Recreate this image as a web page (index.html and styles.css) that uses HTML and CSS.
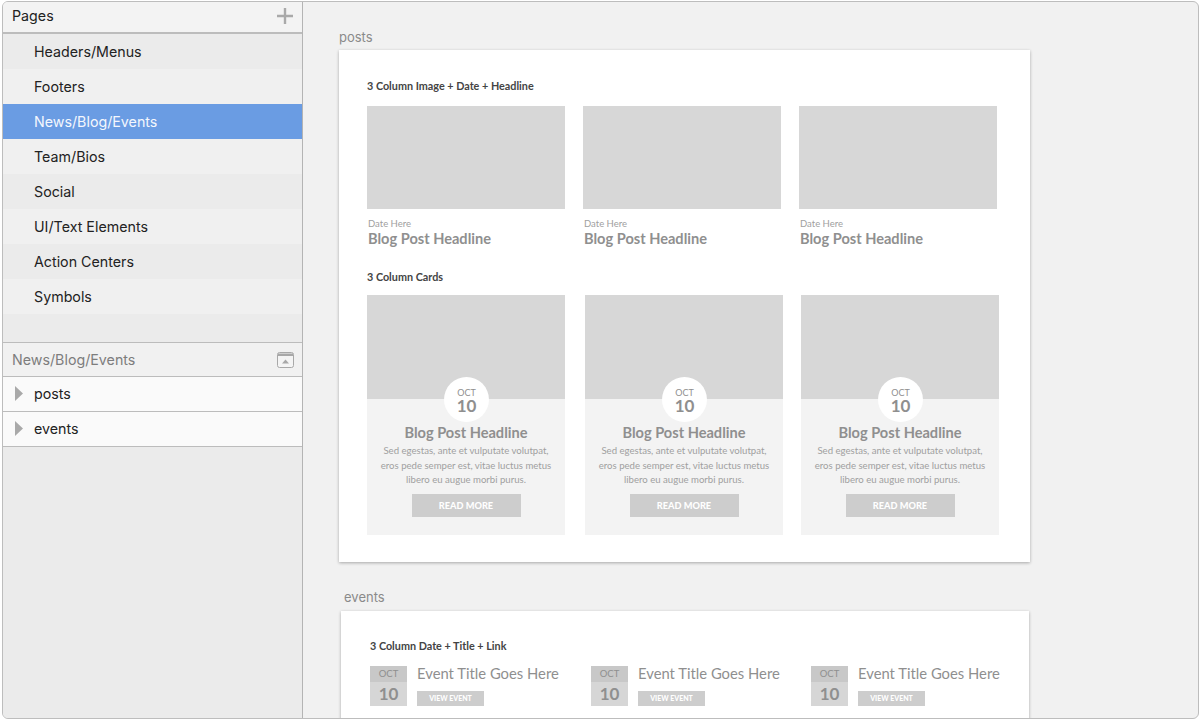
FILE: index.html
```html
<!DOCTYPE html>
<html lang="en">
<head>
<meta charset="utf-8">
<title>Pages</title>
<link rel="stylesheet" href="styles.css">
</head>
<body>
<div class="window">
  <aside class="sidebar">
    <header class="pages-head">
      <span>Pages</span>
      <svg class="plus" width="16" height="16" viewBox="0 0 16 16"><path d="M8 0v16M0 8h16" stroke="#a9a9a9" stroke-width="2.4" fill="none"/></svg>
    </header>
    <ul class="pages">
      <li class="dark">Headers/Menus</li>
      <li>Footers</li>
      <li class="selected">News/Blog/Events</li>
      <li>Team/Bios</li>
      <li class="dark">Social</li>
      <li>UI/Text Elements</li>
      <li class="dark">Action Centers</li>
      <li>Symbols</li>
    </ul>
    <div class="pages-rest"></div>
    <header class="layers-head">
      <span>News/Blog/Events</span>
      <svg width="17" height="16" viewBox="0 0 17 16"><rect x=".5" y=".5" width="16" height="15" rx="2" fill="#f4f4f4" stroke="#a8a8a8"/><path d="M1 1.500h15v2.500H1z" fill="#a8a8a8"/><path d="M8.500 7.500l3.500 4H5z" fill="#a8a8a8"/></svg>
    </header>
    <div class="layer"><svg width="8" height="15" viewBox="0 0 8 15"><path d="M0 0l8 7.500L0 15z" fill="#a9a9a9"/></svg><span>posts</span></div>
    <div class="layer"><svg width="8" height="15" viewBox="0 0 8 15"><path d="M0 0l8 7.500L0 15z" fill="#a9a9a9"/></svg><span>events</span></div>
  </aside>
  <main class="canvas">
    <div class="label label-posts">posts</div>
    <section class="board board-posts">
      <h2 class="section-title">3 Column Image + Date + Headline</h2>
      <div class="posts">
        <article class="post"><div class="image"></div><p class="date">Date Here</p><h3 class="headline">Blog Post Headline</h3></article>
        <article class="post"><div class="image"></div><p class="date">Date Here</p><h3 class="headline">Blog Post Headline</h3></article>
        <article class="post"><div class="image"></div><p class="date">Date Here</p><h3 class="headline">Blog Post Headline</h3></article>
      </div>
      <h2 class="section-title title-cards">3 Column Cards</h2>
      <div class="cards">
        <article class="card">
          <div class="image"></div>
          <div class="badge"><span class="month">OCT</span><span class="day">10</span></div>
          <h3 class="headline">Blog Post Headline</h3>
          <p class="copy">Sed egestas, ante et vulputate volutpat, eros pede semper est, vitae luctus metus libero eu augue morbi purus.</p>
          <a class="button">READ MORE</a>
        </article>
        <article class="card">
          <div class="image"></div>
          <div class="badge"><span class="month">OCT</span><span class="day">10</span></div>
          <h3 class="headline">Blog Post Headline</h3>
          <p class="copy">Sed egestas, ante et vulputate volutpat, eros pede semper est, vitae luctus metus libero eu augue morbi purus.</p>
          <a class="button">READ MORE</a>
        </article>
        <article class="card">
          <div class="image"></div>
          <div class="badge"><span class="month">OCT</span><span class="day">10</span></div>
          <h3 class="headline">Blog Post Headline</h3>
          <p class="copy">Sed egestas, ante et vulputate volutpat, eros pede semper est, vitae luctus metus libero eu augue morbi purus.</p>
          <a class="button">READ MORE</a>
        </article>
      </div>
    </section>
    <div class="label label-events">events</div>
    <section class="board board-events">
      <h2 class="section-title">3 Column Date + Title + Link</h2>
      <div class="events">
        <article class="event"><div class="cal"><span class="cal-month">OCT</span><span class="cal-day">10</span></div><div class="event-body"><h3 class="event-title">Event Title Goes Here</h3><a class="event-button">VIEW EVENT</a></div></article>
        <article class="event"><div class="cal"><span class="cal-month">OCT</span><span class="cal-day">10</span></div><div class="event-body"><h3 class="event-title">Event Title Goes Here</h3><a class="event-button">VIEW EVENT</a></div></article>
        <article class="event"><div class="cal"><span class="cal-month">OCT</span><span class="cal-day">10</span></div><div class="event-body"><h3 class="event-title">Event Title Goes Here</h3><a class="event-button">VIEW EVENT</a></div></article>
      </div>
    </section>
  </main>
</div>
</body>
</html>
```
FILE: styles.css
```css
* { box-sizing: border-box; }
html, body { margin: 0; height: 720px; overflow: hidden; background: #fff; }
h2, h3, p, ul { margin: 0; padding: 0; }
ul { list-style: none; }

.window {
  margin: 1px 1px 1px 2px;
  height: 718px;
  display: flex;
  border: 1px solid #bdbdbd;
  border-radius: 6px;
  overflow: hidden;
  background: #f1f1f1;
}

.sidebar {
  width: 300px;
  flex: none;
  display: flex;
  flex-direction: column;
  background: #ebebeb;
  border-right: 1px solid #b4b4b4;
  font-family: Inter, "Liberation Sans", sans-serif;
  font-size: 14.250px;
  color: #222;
}
.pages-head {
  height: 32px;
  flex: none;
  padding: 0 9px 3px 9px;
  display: flex;
  align-items: center;
  justify-content: space-between;
  background: #f3f3f3;
  border-bottom: 2px solid #bcbcbc;
}
.pages li {
  height: 35px;
  padding-left: 31px;
  display: flex;
  align-items: center;
  background: #f0f0f0;
}
.pages li.dark { background: #ebebeb; }
.pages li.selected { background: #6a9ce3; color: #f4f7fd; }
.pages-rest {
  height: 29px;
  flex: none;
  border-bottom: 1px solid #bcbcbc;
}
.layers-head {
  height: 34px;
  flex: none;
  padding: 0 8px 0 9px;
  display: flex;
  align-items: center;
  justify-content: space-between;
  background: #f1f1f1;
  color: #7d7d7d;
  border-bottom: 1px solid #bcbcbc;
}
.layer {
  height: 35px;
  flex: none;
  padding: 0 0 1px 12px;
  display: flex;
  align-items: center;
  gap: 11px;
  background: #fafafa;
  border-bottom: 1px solid #bcbcbc;
}

.canvas {
  flex: 1;
  min-width: 0;
  overflow: hidden;
  font-family: Lato, "Liberation Sans", sans-serif;
}
.label {
  font-family: Inter, "Liberation Sans", sans-serif;
  font-size: 13px;
  line-height: 16px;
  color: #8a8a8a;
}
.label-posts { margin: 27px 0 5px 36px; }
.label-events { margin: 27px 0 6px 41px; }

.board { background: #fff; box-shadow: 0 1px 3px rgba(0,0,0,.3); }
.board-posts { width: 691px; height: 512px; margin-left: 36px; padding: 29px 0 0 28px; }
.board-events { width: 688px; height: 120px; margin-left: 38px; padding: 28px 0 0 29px; }

.section-title {
  font-size: 10.800px;
  line-height: 14px;
  font-weight: 700;
  color: #444;
}
.title-cards { margin-top: 22px; }

.posts { display: flex; gap: 18px; margin-top: 13px; }
.post { width: 198px; }
.image { height: 103px; background: #d7d7d7; }
.date { margin-top: 9px; padding-left: 1px; font-size: 9.500px; line-height: 12px; color: #a0a0a0; }
.headline { font-size: 14.600px; line-height: 18px; font-weight: 700; color: #8f8f8f; }
.post .headline { padding-left: 1px; }

.cards { display: flex; gap: 18px; margin-top: 11px; }
.card {
  width: 198px;
  height: 240px;
  position: relative;
  background: #f3f3f3;
  text-align: center;
}
.card:nth-child(2) { margin-left: 2px; }
.card .image { height: 104px; }
.badge {
  position: absolute;
  top: 82px;
  left: 77px;
  width: 45px;
  height: 45px;
  border-radius: 50%;
  background: #fff;
  display: flex;
  flex-direction: column;
  align-items: center;
  padding-top: 11px;
  color: #8f8f8f;
}
.month { font-size: 9px; line-height: 10px; }
.day { font-size: 17px; line-height: 13px; font-weight: 700; margin-top: 1px; }
.card .headline { margin-top: 25px; }
.copy {
  width: 180px;
  margin: 2px auto 0;
  font-size: 9.600px;
  line-height: 14.500px;
  color: #a0a0a0;
}
.button {
  display: block;
  width: 109px;
  height: 23px;
  margin: 6px auto 0;
  background: #cdcdcd;
  color: #fff;
  font-size: 9.200px;
  font-weight: 900;
  line-height: 23px;
}

.events { display: flex; margin-top: 13px; }
.event { width: 221px; flex: none; display: flex; gap: 10px; }
.event:nth-child(2) { width: 220px; }
.cal { width: 37px; height: 40px; flex: none; display: flex; flex-direction: column; text-align: center; background: #d6d6d6; color: #8f8f8f; }
.cal-month { height: 16px; background: #c8c8c8; font-size: 9.500px; line-height: 16px; color: #8f8f8f; }
.cal-day { flex: 1; font-size: 17px; font-weight: 700; line-height: 24px; }
.event-title { font-size: 14.800px; line-height: 15px; font-weight: 400; color: #8f8f8f; }
.event-button {
  display: block;
  width: 67px;
  height: 15px;
  margin-top: 10px;
  background: #cdcdcd;
  color: #fff;
  font-size: 7px;
  font-weight: 900;
  line-height: 15px;
  text-align: center;
}
```
